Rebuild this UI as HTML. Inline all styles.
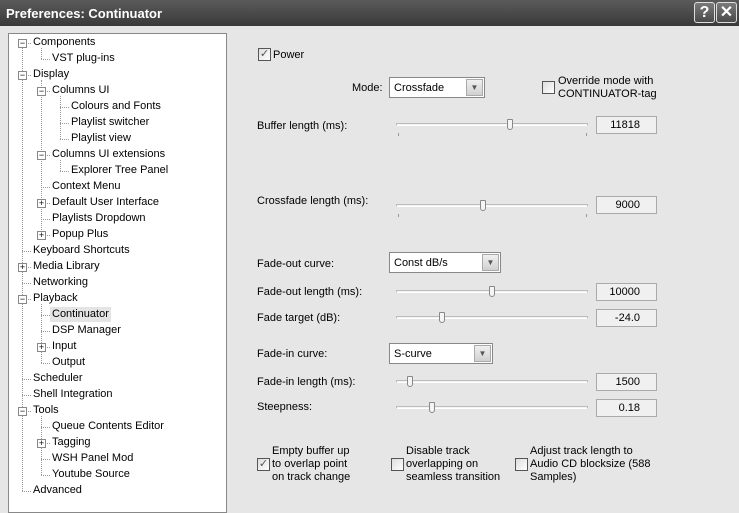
<!DOCTYPE html>
<html><head><meta charset="utf-8"><style>
*{margin:0;padding:0;box-sizing:border-box}
body{width:739px;height:500px;overflow:hidden;background:#e6e6e6;font-family:"Liberation Sans",Tahoma,sans-serif;font-size:11px;color:#000;position:relative}
.title{position:absolute;left:0;top:0;width:739px;height:26px;background:linear-gradient(#5a5a5a,#3a3a3a);color:#fff;font-size:13px;font-weight:bold;padding:6px 0 0 6px}
.tb{position:absolute;top:2px;width:21px;height:21px;border:1px solid #ddd;border-radius:3px;background:linear-gradient(#7a7a7a,#4a4a4a);color:#fff;font-weight:bold;font-size:16px;text-align:center;line-height:19px}
.tree{position:absolute;left:8px;top:33px;width:219px;height:480px;background:#fff;border:1px solid #888}
.it{position:absolute;white-space:nowrap;line-height:13px}
.bx{position:absolute;width:9px;height:9px;border:1px solid #888;background:#fff;font-size:9px;line-height:6px;text-align:center;color:#000}
.vl{position:absolute;border-left:1px dotted #999}
.hl{position:absolute;border-top:1px dotted #999;width:7px}
.a{position:absolute;white-space:nowrap}
.cb{position:absolute;width:13px;height:13px;border:1px solid #555;background:linear-gradient(135deg,#ddd,#fff)}
.sel{position:absolute;height:21px;border:1px solid #888;background:#fff;padding:4px 0 0 4px}
.sel i{position:absolute;right:1px;top:1px;width:17px;height:17px;background:linear-gradient(#f0f0f0,#d0d0d0);border:1px solid #aaa;font-style:normal;font-size:8px;text-align:center;line-height:15px;color:#555}
.trk{position:absolute;left:396px;width:192px;height:3px;border:1px solid #bbb;border-bottom-color:#fff;background:#f4f4f4}
.tk{position:absolute;width:1px;height:3px;background:#999}
.th{position:absolute;width:6px;height:11px;border:1px solid #888;border-radius:1px 1px 3px 3px;background:#f5f5f5}
.val{position:absolute;left:596px;width:61px;height:18px;border:1px solid #aaa;background:#f0f0f0;text-align:right;padding:2px 16px 0 0}
</style></head><body>
<div class="title">Preferences: Continuator</div>
<div class="tb" style="left:694px">?</div>
<div class="tb" style="left:716px">✕</div>

<div class="tree"></div>
<div id="t"></div>
<script>
var items=[[0,"Components",1],[1,"VST plug-ins",0],[0,"Display",1],[1,"Columns UI",1],[2,"Colours and Fonts",0],[2,"Playlist switcher",0],[2,"Playlist view",0],[1,"Columns UI extensions",1],[2,"Explorer Tree Panel",0],[1,"Context Menu",0],[1,"Default User Interface",2],[1,"Playlists Dropdown",0],[1,"Popup Plus",2],[0,"Keyboard Shortcuts",0],[0,"Media Library",2],[0,"Networking",0],[0,"Playback",1],[1,"Continuator",0],[1,"DSP Manager",0],[1,"Input",2],[1,"Output",0],[0,"Scheduler",0],[0,"Shell Integration",0],[0,"Tools",1],[1,"Queue Contents Editor",0],[1,"Tagging",2],[1,"WSH Panel Mod",0],[1,"Youtube Source",0],[0,"Advanced",0]];
var h="";
h+='<div class="vl" style="left:22px;top:48px;height:443px"></div>';
h+='<div class="vl" style="left:41px;top:80px;height:160px"></div>';
h+='<div class="vl" style="left:60px;top:96px;height:43px"></div>';
h+='<div class="vl" style="left:60px;top:160px;height:11px"></div>';
h+='<div class="vl" style="left:41px;top:304px;height:59px"></div>';
h+='<div class="vl" style="left:41px;top:416px;height:59px"></div>';
h+='<div class="vl" style="left:41px;top:48px;height:11px"></div>';
items.forEach(function(o,i){var y=43+16*i,x=22+19*o[0];
h+='<div class="hl" style="left:'+x+'px;top:'+y+'px;width:9px"></div>';
if(o[2])h+='<div class="bx" style="left:'+(x-4)+'px;top:'+(y-4)+'px">'+(o[2]==1?'−':'+')+'</div>';
var bg=o[1]=="Continuator"?'background:#e4e4e4;padding:1px 2px;margin:-1px 0 0 -2px;':'';
h+='<div class="it" style="left:'+(x+11)+'px;top:'+(y-7)+'px;'+bg+'">'+o[1]+'</div>';});
document.getElementById('t').innerHTML=h;
</script>

<div class="cb" style="left:258px;top:48px;font-size:11px;line-height:11px;text-align:center;color:#555">✓</div>
<div class="a" style="left:273px;top:49px">Power</div>
<div class="a" style="left:352px;top:82px">Mode:</div>
<div class="sel" style="left:389px;top:77px;width:96px">Crossfade<i>▼</i></div>
<div class="cb" style="left:542px;top:81px"></div>
<div class="a" style="left:558px;top:75px;line-height:13px">Override mode with<br>CONTINUATOR-tag</div>

<div class="a" style="left:257px;top:120px">Buffer length (ms):</div>
<div class="trk" style="top:123px"></div><div class="tk" style="left:398px;top:133px"></div><div class="tk" style="left:586px;top:133px"></div>
<div class="th" style="left:507px;top:119px"></div><div class="val" style="top:116px">11818</div>

<div class="a" style="left:257px;top:195px">Crossfade length (ms):</div>
<div class="trk" style="top:204px"></div><div class="tk" style="left:398px;top:214px"></div><div class="tk" style="left:586px;top:214px"></div>
<div class="th" style="left:480px;top:200px"></div><div class="val" style="top:196px">9000</div>

<div class="a" style="left:257px;top:258px">Fade-out curve:</div>
<div class="sel" style="left:389px;top:252px;width:112px">Const dB/s<i>▼</i></div>

<div class="a" style="left:257px;top:286px">Fade-out length (ms):</div>
<div class="trk" style="top:290px"></div><div class="th" style="left:489px;top:286px"></div><div class="val" style="top:283px">10000</div>

<div class="a" style="left:257px;top:312px">Fade target (dB):</div>
<div class="trk" style="top:316px"></div><div class="th" style="left:439px;top:312px"></div><div class="val" style="top:309px">-24.0</div>

<div class="a" style="left:257px;top:348px">Fade-in curve:</div>
<div class="sel" style="left:389px;top:343px;width:104px">S-curve<i>▼</i></div>

<div class="a" style="left:257px;top:376px">Fade-in length (ms):</div>
<div class="trk" style="top:380px"></div><div class="th" style="left:407px;top:376px"></div><div class="val" style="top:373px">1500</div>

<div class="a" style="left:257px;top:401px">Steepness:</div>
<div class="trk" style="top:406px"></div><div class="th" style="left:429px;top:402px"></div><div class="val" style="top:399px">0.18</div>

<div class="cb" style="left:257px;top:458px;font-size:11px;line-height:11px;text-align:center;color:#555">✓</div>
<div class="a" style="left:272px;top:445px;line-height:13px">Empty buffer up<br>to overlap point<br>on track change</div>
<div class="cb" style="left:391px;top:458px"></div>
<div class="a" style="left:406px;top:445px;line-height:13px">Disable track<br>overlapping on<br>seamless transition</div>
<div class="cb" style="left:515px;top:458px"></div>
<div class="a" style="left:530px;top:445px;line-height:13px">Adjust track length to<br>Audio CD blocksize (588<br>Samples)</div>
</body></html>
